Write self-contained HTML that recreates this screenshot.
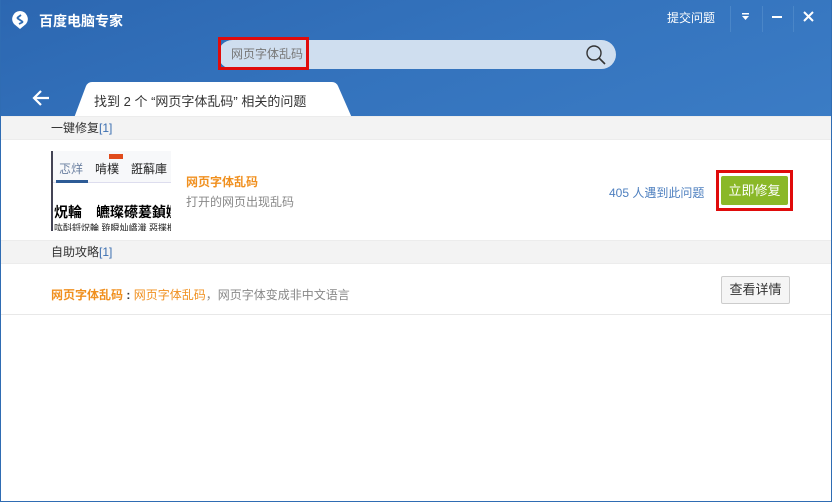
<!DOCTYPE html>
<html><head><meta charset="utf-8"><style>
*{margin:0;padding:0;box-sizing:border-box}
body{width:832px;height:502px;overflow:hidden;font-family:"Liberation Sans","Noto Sans CJK SC",sans-serif;font-size:12px;background:#fff;position:relative}
.win{position:absolute;left:0;top:0;width:832px;height:502px;border:1px solid #2f6cb3;border-top:none}
.hdr{position:absolute;left:0;top:0;width:832px;height:117px;background:linear-gradient(160deg,#2c67b1 0%,#3473bd 50%,#3b7cc5 100%)}
.abs{position:absolute}
.sec{position:absolute;left:1px;width:830px;height:24px;background:#f3f3f3;border-top:1px solid #ececec;border-bottom:1px solid #ececec;color:#333;font-size:12px;line-height:22px;padding-left:50px}
.sec b{font-weight:normal;color:#3c6fb0}
</style></head><body>
<div class="hdr"></div>
<div class="win"></div>
<svg class="abs" style="left:10px;top:10px" width="20" height="20" viewBox="0 0 20 20"><path d="M10 1a8 8 0 0 1 6 13l-6 5-6-5A8 8 0 0 1 10 1z" fill="#fff"/><path d="M7 8l4-3M7 8l6 4M9 14l4-2" stroke="#2f6cb3" stroke-width="1.8" fill="none"/></svg>
<div class="abs" style="left:39px;top:11px;color:#fff;font-size:14px;font-weight:bold">百度电脑专家</div>
<div class="abs" style="left:667px;top:9px;color:#fff;font-size:12px">提交问题</div>
<div class="abs" style="left:730px;top:6px;width:1px;height:26px;background:#4a86c8"></div>
<div class="abs" style="left:762px;top:6px;width:1px;height:26px;background:#4a86c8"></div>
<div class="abs" style="left:793px;top:6px;width:1px;height:26px;background:#4a86c8"></div>
<svg class="abs" style="left:741px;top:13px" width="10" height="8"><rect x="1" y="0" width="7" height="1.5" fill="#fff"/><path d="M1 3h7l-3.5 4z" fill="#fff"/></svg>
<div class="abs" style="left:772px;top:16px;width:10px;height:2px;background:#fff"></div>
<svg class="abs" style="left:803px;top:11px" width="11" height="11"><path d="M1 1l9 9M10 1l-9 9" stroke="#fff" stroke-width="2"/></svg>
<div class="abs" style="left:218px;top:40px;width:398px;height:29px;border-radius:15px;background:#cfdeef"></div>
<div class="abs" style="left:218px;top:37px;width:91px;height:33px;border:3px solid #e00b0b"></div>
<div class="abs" style="left:231px;top:45px;color:#777;font-size:12px">网页字体乱码</div>
<svg class="abs" style="left:585px;top:44px" width="22" height="22"><circle cx="9" cy="9" r="7" stroke="#333" stroke-width="1.4" fill="none"/><path d="M14 14l6 6" stroke="#333" stroke-width="1.6"/></svg>
<svg class="abs" style="left:31px;top:89px" width="20" height="18"><path d="M18 9H3M10 2L3 9l7 7" stroke="#fff" stroke-width="2.2" fill="none"/></svg>
<svg class="abs" style="left:74px;top:82px" width="280" height="36"><path d="M0 36L12 4Q14 0 18 0H258Q262 0 264 4L278 36Z" fill="#fff"/></svg>
<div class="abs" style="left:94px;top:91px;color:#333;font-size:13px;white-space:nowrap">找到 2 个 “网页字体乱码” 相关的问题</div>
<div class="sec" style="top:116px">一键修复<b>[1]</b></div>
<div class="abs" style="left:51px;top:151px;width:120px;height:80px;background:#fff;border-left:2px solid #445;overflow:hidden">
 <div class="abs" style="left:0;top:0;width:120px;height:32px;background:#f7f8fa;border-bottom:1px solid #dde"></div>
 <div class="abs" style="left:6px;top:9px;color:#6a7fa0;font-size:12px">忑烊</div>
 <div class="abs" style="left:42px;top:9px;color:#222;font-size:12px">啃樸</div>
 <div class="abs" style="left:56px;top:3px;width:14px;height:5px;background:#e04b1c"></div>
 <div class="abs" style="left:78px;top:9px;color:#222;font-size:12px">誑蔛庫</div>
 <div class="abs" style="left:3px;top:29px;width:32px;height:3px;background:#2d5b96"></div>
 <div class="abs" style="left:1px;top:51px;color:#000;font-size:14px;font-weight:bold;white-space:nowrap">炾輪　皫璨礤萲鍞嫐</div>
 <div class="abs" style="left:1px;top:70px;color:#222;font-size:9px;white-space:nowrap">吰酙鋝炾輪 臶瞬灿嶠瀸 惡揲楖</div>
</div>
<div class="abs" style="left:186px;top:173px;color:#f0901f;font-size:12px;font-weight:bold">网页字体乱码</div>
<div class="abs" style="left:186px;top:193px;color:#888;font-size:12px">打开的网页出现乱码</div>
<div class="abs" style="left:609px;top:184px;color:#4d7fbf;font-size:12px">405 人遇到此问题</div>
<div class="abs" style="left:716px;top:170px;width:77px;height:41px;border:3px solid #e00b0b"></div>
<div class="abs" style="left:721px;top:176px;width:67px;height:29px;background:#8ab828;border-radius:2px;color:#fff;font-size:13px;text-align:center;line-height:29px">立即修复</div>
<div class="sec" style="top:240px">自助攻略<b>[1]</b></div>
<div class="abs" style="left:51px;top:286px;font-size:12px;color:#888;white-space:nowrap"><span style="color:#f0901f;font-weight:bold">网页字体乱码</span><b style="color:#333"> : </b><span style="color:#f0901f">网页字体乱码</span>，网页字体变成非中文语言</div>
<div class="abs" style="left:721px;top:276px;width:69px;height:28px;background:#f5f5f5;border:1px solid #ccc;border-radius:2px;color:#333;font-size:13px;text-align:center;line-height:26px">查看详情</div>
<div class="abs" style="left:1px;top:314px;width:830px;height:1px;background:#e8e8e8"></div>
</body></html>
